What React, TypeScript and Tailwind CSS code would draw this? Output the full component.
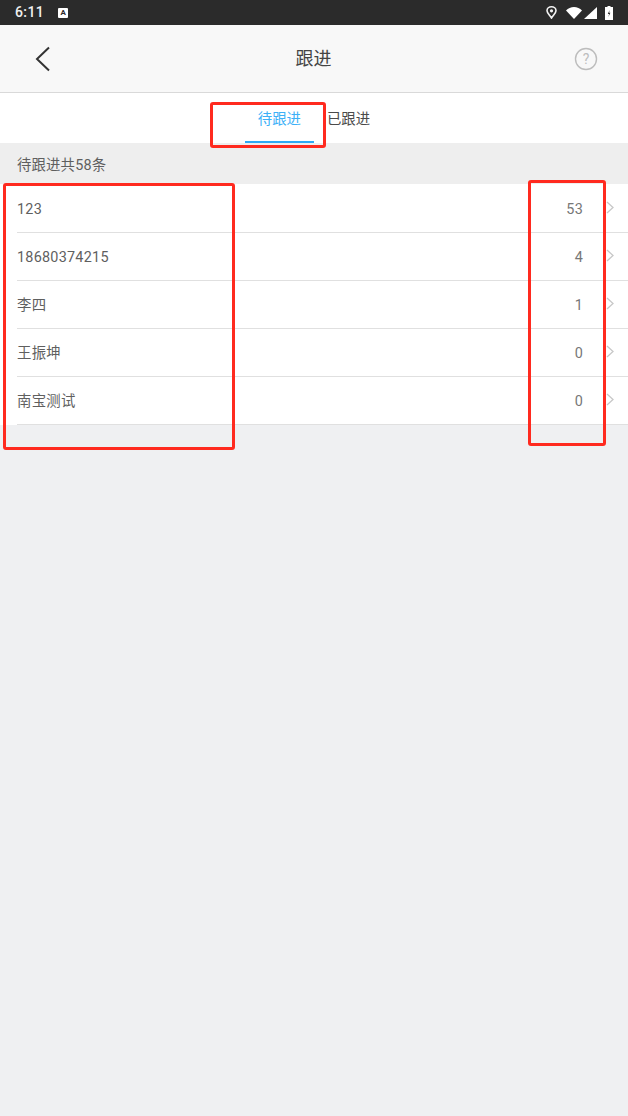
const font = { fontFamily: 'Roboto, "Noto Sans CJK SC", sans-serif' };

const rows = [
  ["123", "53"],
  ["18680374215", "4"],
  ["李四", "1"],
  ["王振坤", "0"],
  ["南宝测试", "0"],
];

function Row({ name, count }: { name: string; count: string }) {
  return (
    <div className="flex h-[48px] items-center bg-white pl-[17px]">
      <div className="flex h-full flex-1 items-center border-b border-[#e0e0e0] pt-[3px]">
        <span className="flex-1 text-[14.4px] tracking-[0.25px] text-[#5f5f5f]">{name}</span>
        <span className="mr-[23px] text-[14.4px] tracking-[0.25px] text-[#777777]">{count}</span>
        <svg width="8" height="13" viewBox="0 0 8 13" className="mr-[14px] mb-[5px]" fill="none" stroke="#c8c8c8" strokeWidth="1.3">
          <path d="M1 1l6 5.5-6 5.5" />
        </svg>
      </div>
    </div>
  );
}

export default function App() {
  return (
    <div className="relative flex h-[1116px] w-[628px] flex-col overflow-hidden bg-[#eff0f2]" style={font}>
      <div className="flex h-[25px] items-center bg-[#2b2b2b] pl-[15px] pr-[15px] text-white">
        <span className="text-[14px] font-medium tracking-[0.4px] text-[#f0f0f0]">6:11</span>
        <span className="ml-[14px] flex h-[10px] w-[10px] items-center justify-center rounded-[1px] bg-white text-[8px] font-bold leading-none text-[#2b2b2b]">A</span>
        <div className="ml-auto flex items-center">
          <svg width="11" height="13" viewBox="0 0 11 13" fill="none" stroke="#f2f2f2" strokeWidth="1.6">
            <path d="M5.5 12C3.5 9 1 7 1 4.8a4.5 4 0 019 0C10 7 7.5 9 5.5 12z" />
            <circle cx="5.5" cy="4.8" r="0.8" fill="#f2f2f2" />
          </svg>
          <svg width="16" height="12" viewBox="0 0 16 12" className="ml-[9px]" fill="#ffffff">
            <path d="M0 3.5C2 1.5 5 0 8 0s6 1.5 8 3.5L8 12z" />
          </svg>
          <svg width="13" height="12" viewBox="0 0 13 12" className="ml-[2px]" fill="#ffffff">
            <path d="M13 0v12H0z" />
          </svg>
          <svg width="8" height="14" viewBox="0 0 8 14" className="ml-[8px]">
            <path d="M2.5 0h3v1H8v13H0V1h2.5z" fill="#ffffff" />
            <path d="M4.6 4L2.8 8h1.3L3.4 11 5.4 6.8H4.1z" fill="#2b2b2b" />
          </svg>
        </div>
      </div>

      <div className="flex h-[68px] items-center justify-between border-b border-[#d9d9d9] bg-[#f8f8f8] pl-[35px] pr-[30px]">
        <svg width="16" height="26" viewBox="0 0 16 26" fill="none" stroke="#333333" strokeWidth="2">
          <path d="M14 1.5L2 13l12 11.5" />
        </svg>
        <span className="ml-[2px] text-[18px] text-[#444444]">跟进</span>
        <svg width="24" height="24" viewBox="0 0 24 24" fill="none">
          <circle cx="12" cy="12" r="10.5" stroke="#bdbdbd" strokeWidth="1.4" />
          <text x="12" y="17" textAnchor="middle" fontSize="14" fill="#bdbdbd" fontFamily="Roboto">?</text>
        </svg>
      </div>

      <div className="flex h-[50px] justify-center bg-white pr-[13px] text-[14.4px]">
        <div className="flex h-full w-[69px] items-center justify-center border-b-2 border-[#2fa9f5] pt-[6px] text-[#3cb0f7]">待跟进</div>
        <div className="ml-[13px] flex h-full items-center pt-[4px] text-[#4a4a4a]">已跟进</div>
      </div>

      <div className="flex h-[41px] items-center bg-[#eeeeee] pl-[17px] pt-[4px] text-[14.4px] tracking-[0.15px] text-[#5f5f5f]">待跟进共58条</div>

      <div className="flex flex-col bg-white pt-[1px]">
        {rows.map(([name, count], i) => (
          <Row key={i} name={name} count={count} />
        ))}
      </div>

      <div className="absolute left-[210px] top-[102px] h-[46px] w-[116px] rounded-[3px] border-[3px] border-[#ff2a1f]" />
      <div className="absolute left-[3px] top-[183px] h-[267px] w-[232px] rounded-[3px] border-[3px] border-[#ff2a1f]" />
      <div className="absolute left-[528px] top-[180px] h-[266px] w-[78px] rounded-[3px] border-[3px] border-[#ff2a1f]" />
    </div>
  );
}
